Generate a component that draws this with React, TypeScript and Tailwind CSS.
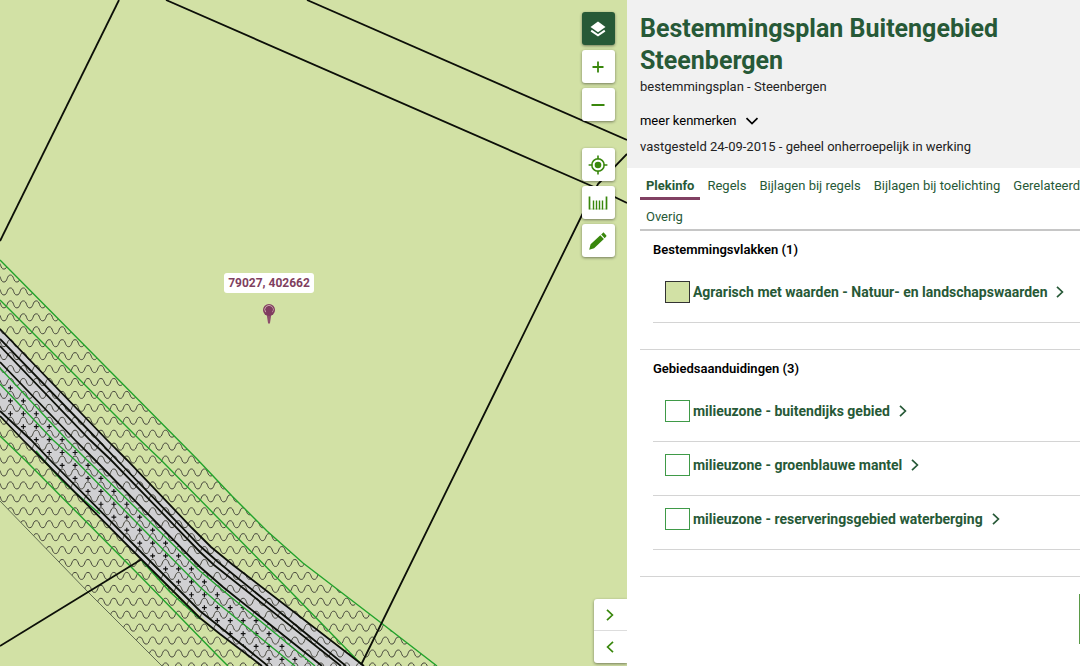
import React from 'react';

const UPPER = 'M0 260 L197 459 L232 496 L267 531 L303 563 L380 622 L437 666';
const LOWER = '162 666 L88 592 L0 501 Z';
const BAND =
  'M0 329 L108 441 L127 460 L192 528 L211 547 L233 565 L364 666 L262 666 L220 634 L142 560 L43 460 L0 416 Z';

const blackLines = [
  'M119 0 L0 241',
  'M166 0 L594 187 L627 203',
  'M307 0 L627 140',
  'M627 154 L598 184 L582 215 L361 665',
  'M0 646 L142 559',
  'M0 329 L108 441 L127 460 L192 528 L211 547 L233 565 L364 666',
  'M0 339 L98 440 L117 460 L200 546 L218 562 L346 666',
  'M0 346 L90 440 L111 460 L200 552 L214 565 L341 666',
  'M0 362 L75 440 L95 460 L200 567 L223 587 L322 666',
  'M0 411 L31 440 L50 460 L142 553 L200 611 L220 627 L268 666',
  'M0 416 L23 440 L43 460 L142 560 L200 618 L220 634 L262 666',
];

const greenLines = [
  UPPER,
  'M0 300 L140 440 L160 459 L220 520 L290 591 L361 664',
  'M0 368 L67 440 L87 460 L200 571 L220 588 L315 666',
  'M0 384 L53 440 L75 460 L200 587 L220 605 L295 666',
  'M0 436 L25 460 L142 578 L217 655 L228 666',
  'M36 451 L62 481 L100 514',
  'M142 561 L170 592 L200 619',
];

// Hatch spacing is the same in both directions
const STEP = 12.93;
const rows = Array.from({ length: 32 }, (_, i) => 265.6 + i * STEP);
const cols = Array.from({ length: 35 }, (_, i) => -2.5 + i * STEP);

const wave = cols.map(() => 'c3.9 0 2.6 -7 6.46 -7 c3.9 0 2.6 7 6.47 7').join(' ');
const plusRow = cols.map(() => `m-2.4 0h4.8m-2.4 -2.4v4.8m${STEP} -2.4`).join(' ');

const MapCanvas: React.FC = () => (
  <svg className="absolute inset-0 h-full w-full" aria-hidden="true">
    <defs>
      <clipPath id="zone">
        <path d={`${UPPER} L${LOWER}`} />
      </clipPath>
      <clipPath id="dike">
        <path d="M0 368 L87 460 L200 571 L220 588 L315 666 L268 666 L220 627 L142 553 L50 460 L0 411 Z" />
      </clipPath>
    </defs>
    <path d={BAND} fill="#d0d0d3" />
    <g clipPath="url(#zone)" fill="none" stroke="#44443a" strokeWidth="1">
      {rows.map((y) => (
        <path key={y} d={`M-9 ${y + 3.5} ${wave}`} />
      ))}
    </g>
    <g clipPath="url(#dike)" fill="none" stroke="#111" strokeWidth="1.2">
      {rows.map((y) => (
        <path key={y} d={`M-2.5 ${y + 5.9} ${plusRow}`} />
      ))}
    </g>
    <path d="M162 666 L88 592 L0 501" fill="none" stroke="#55604a" strokeWidth="0.9" />
    <g fill="none" stroke="#22a32c" strokeWidth="1.4">
      {greenLines.map((d) => (
        <path key={d} d={d} />
      ))}
    </g>
    <g fill="none" stroke="#0c0f08" strokeWidth="1.8">
      {blackLines.map((d) => (
        <path key={d} d={d} />
      ))}
    </g>
  </svg>
);

interface MapButtonProps {
  label: string;
  active?: boolean;
  children: React.ReactNode;
}

const MapButton: React.FC<MapButtonProps> = ({ label, active, children }) => (
  <button
    aria-label={label}
    className={`flex h-[33px] w-[33px] items-center justify-center rounded-[3px] shadow-[0_1px_3px_rgba(0,0,0,0.45)] ${
      active ? 'bg-[#275937] text-white' : 'bg-white text-[#39870c]'
    }`}
  >
    <svg width="20" height="20" viewBox="0 0 20 20" fill="none" stroke="currentColor" strokeWidth="1.8">
      {children}
    </svg>
  </button>
);

const Chevron: React.FC<{ d: string; className?: string }> = ({ d, className }) => (
  <svg width="14" height="14" viewBox="0 0 14 14" fill="none" stroke="currentColor" strokeWidth="1.7" className={className}>
    <path d={d} />
  </svg>
);

const RIGHT = 'M4 1.8l5.4 5.2L4 12.2';
const LEFT = 'M10 1.8L4.6 7l5.4 5.2';
const DOWN = 'M1.5 4.2L7 9.6l5.5-5.4';

const tabRows = [['Plekinfo', 'Regels', 'Bijlagen bij regels', 'Bijlagen bij toelichting', 'Gerelateerd'], ['Overig']];

const sections = [
  {
    title: 'Bestemmingsvlakken (1)',
    swatch: 'border-[#333] bg-[#d2e1a5]',
    items: ['Agrarisch met waarden - Natuur- en landschapswaarden'],
  },
  {
    title: 'Gebiedsaanduidingen (3)',
    swatch: 'border-[#3f9a48] bg-white',
    items: [
      'milieuzone - buitendijks gebied',
      'milieuzone - groenblauwe mantel',
      'milieuzone - reserveringsgebied waterberging',
    ],
  },
];

export default function App() {
  return (
    <div className="flex min-h-screen overflow-hidden bg-white font-['Roboto',sans-serif] text-[13px] text-[#222]">
      {/* Map */}
      <main className="relative mb-px flex-1 overflow-hidden bg-[#d2e1a5]">
        <MapCanvas />

        {/* Picked location */}
        <div className="absolute top-[273px] left-[224px] flex w-[90px] flex-col items-center">
          <span className="rounded-[3px] bg-white px-1 text-xs leading-5 font-bold whitespace-nowrap text-[#7f3f60]">
            79027, 402662
          </span>
          <svg width="14" height="22" viewBox="0 0 14 22" className="mt-[10px]">
            <path d="M4.6 11h4.8l-1.5 9.5H6.1z" fill="#8d4f6c" />
            <circle cx="7" cy="7" r="6" fill="#803c60" />
            <path d="M3.7 9.2a4.2 4.2 0 1 1 6.6 0" fill="none" stroke="#d2b3b4" strokeWidth="0.9" />
            <circle cx="7.6" cy="6.6" r="3.2" fill="#803c60" />
          </svg>
        </div>

        {/* Tools */}
        <div className="absolute top-3 right-3 flex flex-col gap-[27px]">
          <div className="flex flex-col gap-[5px]">
            <MapButton label="Kaartlagen" active>
              <path d="M10 2.5l7.5 5.4-7.5 5.4-7.5-5.4z" fill="currentColor" stroke="none" />
              <path d="M3.2 11.6L10 16.4l6.8-4.8" strokeWidth="2" />
            </MapButton>
            <MapButton label="Inzoomen">
              <path d="M10 4.5v11M4.5 10h11" />
            </MapButton>
            <MapButton label="Uitzoomen">
              <path d="M3.5 10h13" strokeWidth="2" />
            </MapButton>
          </div>
          <div className="flex flex-col gap-[5px]">
            <MapButton label="Mijn locatie">
              <circle cx="10" cy="10" r="6.2" strokeWidth="1.5" />
              <circle cx="10" cy="10" r="3.3" fill="currentColor" stroke="none" />
              <path d="M10 .6v4M10 15.4v4M.6 10h4M15.4 10h4" strokeWidth="1.6" />
            </MapButton>
            <MapButton label="Meten">
              <path d="M1.5 3.5v13M18.5 3.5v13" strokeWidth="1.7" />
              <path d="M5.5 7.5v9M8.5 7.5v9M11.5 7.5v9M14.5 7.5v9" strokeWidth="1.4" />
              <path d="M1.5 16h17" strokeWidth="1" strokeOpacity="0.35" />
            </MapButton>
            <MapButton label="Tekenen">
              <path
                d="M1.2 18.8l1.4-5.6L12.3 4.2l3.6 3.9-9.8 9.2zM13.2 3.4l1.6-1.5c.4-.4.9-.4 1.3 0l2.1 2.3c.4.4.4.9 0 1.3l-1.5 1.8z"
                fill="currentColor"
                stroke="none"
              />
            </MapButton>
          </div>
        </div>

        {/* Panel toggles */}
        <div className="absolute right-0 bottom-[3px] flex w-[33px] flex-col divide-y divide-[#ddd] rounded-l-[3px] bg-white text-[#39870c] shadow-[0_1px_3px_rgba(0,0,0,0.45)]">
          <button aria-label="Paneel inklappen" className="flex h-8 items-center justify-center">
            <Chevron d={RIGHT} />
          </button>
          <button aria-label="Paneel uitklappen" className="flex h-8 items-center justify-center">
            <Chevron d={LEFT} />
          </button>
        </div>
      </main>

      {/* Plan details */}
      <aside className="relative w-[41.95%] shrink-0 overflow-hidden">
        <header className="h-[168px] bg-[#f1f1f1] pt-[13px] pl-[13px]">
          <h1 className="text-[25px] leading-8 font-bold text-[#275937]">
            Bestemmingsplan Buitengebied Steenbergen
          </h1>
          <p className="leading-5">bestemmingsplan - Steenbergen</p>
          <button className="mt-[14px] flex items-center gap-2 leading-5 text-black">
            meer kenmerken
            <Chevron d={DOWN} />
          </button>
          <p className="mt-[6px] leading-5">vastgesteld 24-09-2015 - geheel onherroepelijk in werking</p>
        </header>

        <div className="pl-[13px]">
          <nav className="border-b-2 border-[#c6c6c6]">
            {tabRows.map((row) => (
              <div key={row[0]} className="flex gap-px whitespace-nowrap">
                {row.map((tab) => (
                  <a
                    key={tab}
                    href="#"
                    className={`px-[6px] leading-5 text-[#275937] ${
                      tab === 'Plekinfo'
                        ? 'border-b-3 border-[#814063] pt-2 pb-px font-bold'
                        : tab === 'Overig'
                          ? 'pt-[7px] pb-[2px]'
                          : 'pt-2'
                    }`}
                  >
                    {tab}
                  </a>
                ))}
              </div>
            ))}
          </nav>

          {sections.map((section) => (
            <section key={section.title} className="border-b border-[#d4d4d4] pb-[26px] pl-[13px]">
              <h2 className="pt-[9px] leading-5 font-semibold text-black">{section.title}</h2>
              <ul className="pt-[9px]">
                {section.items.map((item) => (
                  <li key={item} className="flex h-[54px] items-center border-b border-[#d4d4d4] pb-2 pl-3">
                    <a href="#" className="flex items-center text-sm font-bold whitespace-nowrap text-[#275937]">
                      <span className={`mr-[3px] h-[22px] w-[25px] border ${section.swatch}`} />
                      {item}
                      <Chevron d={RIGHT} className="ml-[6px]" />
                    </a>
                  </li>
                ))}
              </ul>
            </section>
          ))}
        </div>
        <div className="absolute right-0 bottom-[23px] h-[50px] w-px bg-[#5a9a48]" />
      </aside>
    </div>
  );
}
